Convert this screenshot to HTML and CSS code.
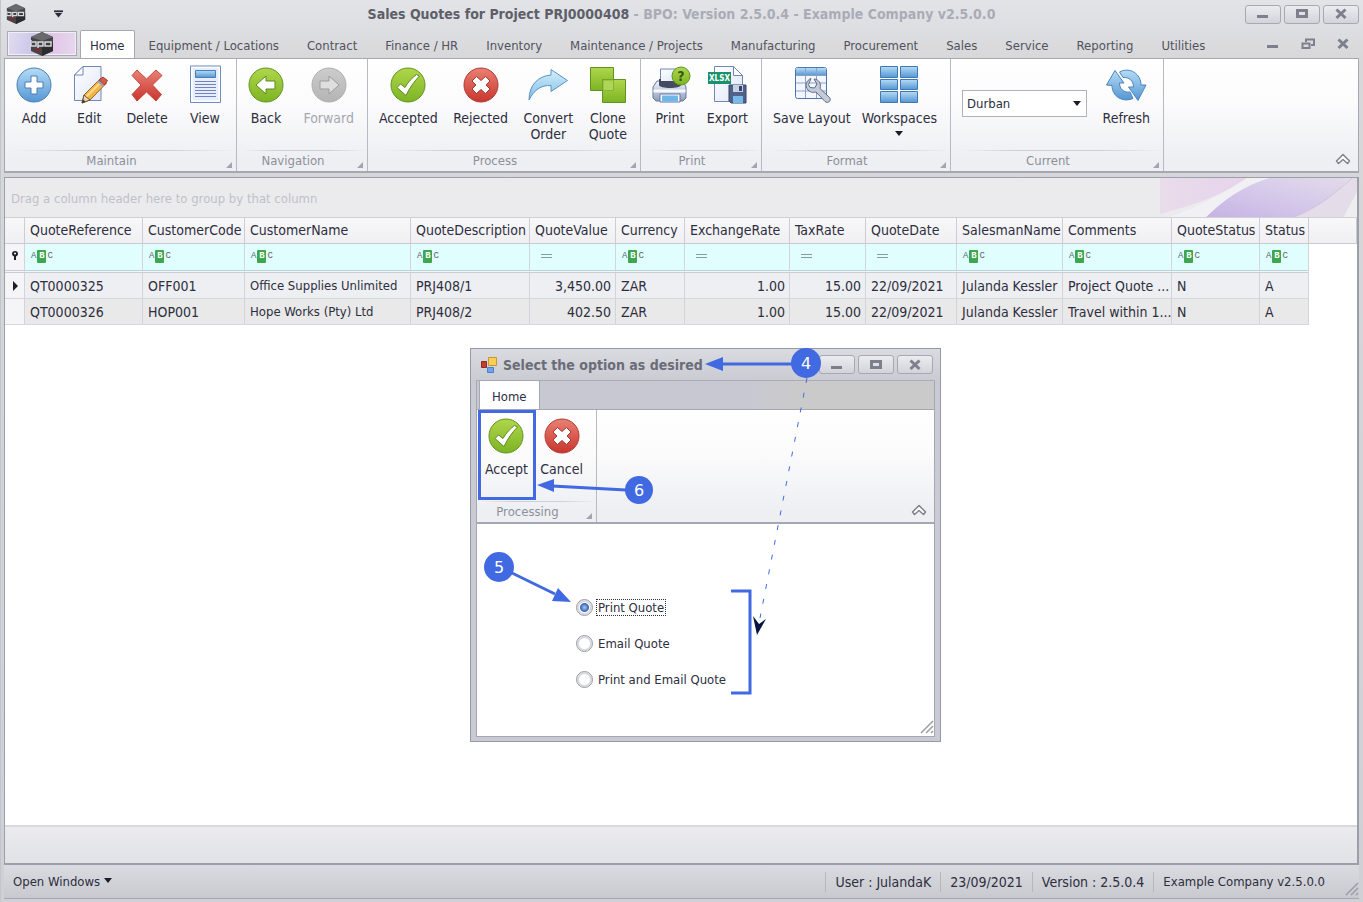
FILE: index.html
```
<!DOCTYPE html>
<html lang="en">
<head>
    <meta charset="UTF-8">
    <meta name="viewport" content="width=device-width, initial-scale=1.0">
    <title>Sales Quotes for Project PRJ0000408</title>
    <link rel="stylesheet" href="styles.css">
</head>
<body>

    <!-- shared gradients and symbols -->
    <svg class="defs" width="0" height="0" aria-hidden="true">
        <defs>
            <linearGradient id="blue" x1="0" y1="0" x2="0" y2="1"><stop offset="0" stop-color="#b5dcf6"/><stop offset="1" stop-color="#5596d3"/></linearGradient>
            <linearGradient id="sky" x1="0" y1="0" x2="0" y2="1"><stop offset="0" stop-color="#d3effb"/><stop offset="1" stop-color="#7fbde8"/></linearGradient>
            <linearGradient id="green" x1="0" y1="0" x2="0" y2="1"><stop offset="0" stop-color="#b0d64a"/><stop offset="1" stop-color="#7cb424"/></linearGradient>
            <linearGradient id="red" x1="0" y1="0" x2="0" y2="1"><stop offset="0" stop-color="#ea8074"/><stop offset="1" stop-color="#c8362e"/></linearGradient>
            <linearGradient id="grey" x1="0" y1="0" x2="0" y2="1"><stop offset="0" stop-color="#cccccc"/><stop offset="1" stop-color="#b4b4b4"/></linearGradient>
            <linearGradient id="paper" x1="0" y1="0" x2="1" y2="1"><stop offset="0" stop-color="#ffffff"/><stop offset="1" stop-color="#dfe6f6"/></linearGradient>
            <linearGradient id="metal" x1="0" y1="0" x2="0" y2="1"><stop offset="0" stop-color="#f4f6fb"/><stop offset="1" stop-color="#8e9cbb"/></linearGradient>
            <symbol id="i-check" viewBox="0 0 36 36">
                <circle cx="18" cy="18" r="17" fill="url(#green)" stroke="#5f9420"/>
                <path d="M7 20.500l3.500-3.500 4.500 3.500C18 15 22 11 26.500 7.500L29.500 9C24 14.500 19.500 21 16 28.500z" fill="#fff" stroke="#5d8a1e" stroke-linejoin="round"/>
            </symbol>
            <symbol id="i-cross" viewBox="0 0 36 36">
                <circle cx="18" cy="18" r="17" fill="url(#red)" stroke="#b03a32"/>
                <path d="M13.500 9.500L18 13.500l4.500-4 4.500 4.500-4 4 4 4-4.500 4.500-4.500-4-4.500 4L9 22l4-4-4-4z" fill="#fff" stroke="#a5372f" stroke-linejoin="round"/>
            </symbol>
            <symbol id="i-logo" viewBox="0 0 24 24">
                <path d="M12 0l11 5v14l-11 5L1 19V5z" fill="#454548"/>
                <path d="M12 0l11 5-11 4L1 5z" fill="#6a6a6d"/>
                <path d="M12 14l11-3v8l-11 5z" fill="#2c2c2f"/>
                <path d="M1 8v6h5V10H2M8 16v-6h5v4H8M15 10h6v4h-6z" fill="none" stroke="#d8d8dc" stroke-width="1.500"/>
                <path d="M6 16l4 1-1 3-4-2z" fill="#8f2525"/>
            </symbol>
            <symbol id="i-min" viewBox="0 0 14 12"><path d="M1 8.500h11" stroke="#7c7f8c" stroke-width="3"/></symbol>
            <symbol id="i-max" viewBox="0 0 14 12"><rect x="2.500" y="2.500" width="9" height="6" fill="none" stroke="#7c7f8c" stroke-width="3"/></symbol>
            <symbol id="i-close" viewBox="0 0 14 12"><path d="M2.500 1.500l9 8.500M11.500 1.500l-9 8.500" stroke="#7c7f8c" stroke-width="3"/></symbol>
            <symbol id="i-up" viewBox="0 0 16 12"><path d="M1.500 8L8 1.500 14.500 8l-2 2.500L8 6.500 3.500 10.500z" fill="#fff" stroke="#7f828c" stroke-width="1.500" stroke-linejoin="round"/></symbol>
            <symbol id="i-grip" viewBox="0 0 14 14"><path d="M1 13L13 1M6 13l7-7M11 13l2-2" stroke="#9a9ca8" stroke-width="1.500"/></symbol>
        </defs>
    </svg>

    <div class="window">
        <header class="titlebar">
            <div class="quick">
                <svg class="logo-small" viewBox="0 0 24 24"><use href="#i-logo"/></svg>
                <button class="quick-more" aria-label="Customize toolbar"><svg viewBox="0 0 10 8"><path d="M0 1h10" stroke="#2a2b38" stroke-width="2"/><path d="M1 3h8L5 8z" fill="#2a2b38"/></svg></button>
            </div>
            <h1>Sales Quotes for Project PRJ0000408 <span>- BPO: Version 2.5.0.4 - Example Company v2.5.0.0</span></h1>
            <div class="win-buttons">
                <button aria-label="Minimize"><svg viewBox="0 0 14 12"><use href="#i-min"/></svg></button>
                <button aria-label="Maximize"><svg viewBox="0 0 14 12"><use href="#i-max"/></svg></button>
                <button aria-label="Close"><svg viewBox="0 0 14 12"><use href="#i-close"/></svg></button>
            </div>
        </header>

        <nav class="tabs">
            <button class="app-button" aria-label="Application menu"><svg viewBox="0 0 24 24"><use href="#i-logo"/></svg></button>
            <a class="tab active" href="#">Home</a>
            <a class="tab" href="#">Equipment / Locations</a>
            <a class="tab" href="#">Contract</a>
            <a class="tab" href="#">Finance / HR</a>
            <a class="tab" href="#">Inventory</a>
            <a class="tab" href="#">Maintenance / Projects</a>
            <a class="tab" href="#">Manufacturing</a>
            <a class="tab" href="#">Procurement</a>
            <a class="tab" href="#">Sales</a>
            <a class="tab" href="#">Service</a>
            <a class="tab" href="#">Reporting</a>
            <a class="tab" href="#">Utilities</a>
            <div class="mdi-buttons">
                <button aria-label="Minimize child"><svg viewBox="0 0 14 12"><use href="#i-min"/></svg></button>
                <button aria-label="Restore child"><svg viewBox="0 0 14 12"><path d="M5 4V1.500h8V7h-3M1.500 5.500h7V10h-7z" fill="none" stroke="#7c7f8c" stroke-width="2"/></svg></button>
                <button aria-label="Close child"><svg viewBox="0 0 14 12"><use href="#i-close"/></svg></button>
            </div>
        </nav>

        <div class="ribbon main-ribbon">
            <section class="group">
                <div class="items">
                    <button class="item">
                        <svg viewBox="0 0 36 36"><circle cx="18" cy="18" r="17" fill="url(#blue)" stroke="#4a7fb5"/><path d="M15 9h6v6h6v6h-6v6h-6v-6H9v-6h6z" fill="#fff" stroke="#4a7fb5"/></svg>
                        Add
                    </button>
                    <button class="item">
                        <svg viewBox="0 0 36 36"><path d="M12 -.5h18v34H3.500V8z" fill="url(#paper)" stroke="#7187b8"/><path d="M12-.5V8H3.500z" fill="#fff" stroke="#7187b8"/><path d="M11 36l2-8L30 11l5.500 5L19 33z" fill="#f6b445" stroke="#8c6427"/><path d="M15 30L32 13" stroke="#fbdc8c" stroke-width="2"/><path d="M28 13l4-3 4.500 3.500-3 4.500z" fill="#d9584a" stroke="#964038"/><path d="M27 14l5 5" stroke="#8fa0c0" stroke-width="2"/><path d="M11 36l2-8 6 5z" fill="#e9d3ad" stroke="#6b5438"/><path d="M11 36l1-3.500 2.500 2z" fill="#333"/></svg>
                        Edit
                    </button>
                    <button class="item">
                        <svg viewBox="0 0 36 36"><path d="M8 3l9.500 9L27 3l6 5.500-9.500 9.500 9 9.500-5.500 6.500-9.500-9-9.500 9-5-6.500 9-9.500-9-9.500z" fill="url(#red)" stroke="#c5483f" stroke-linejoin="round"/></svg>
                        Delete
                    </button>
                    <button class="item">
                        <svg viewBox="0 0 36 36"><path d="M3.500-1h30v36.500h-30z" fill="#fff" stroke="#6d8cc0"/><path d="M5.500 1h26v32.500h-26z" fill="#e7edfa"/><path d="M8.500 3.500h20v7h-20z" fill="url(#blue)" stroke="#4a7fb5"/><path d="M8 14.500h21M8 17.500h21M8 20.500h21M8 23.500h21M8 26.500h21M8 29.500h21" stroke="#7184bb"/></svg>
                        View
                    </button>
                </div>
                <h2>Maintain</h2>
            </section>

            <section class="group">
                <div class="items">
                    <button class="item">
                        <svg viewBox="0 0 36 36"><circle cx="18" cy="18" r="17" fill="url(#green)" stroke="#5f9420"/><path d="M8 18L18 9v5h9v8h-9v5z" fill="#fff" stroke="#5d8a1e"/></svg>
                        Back
                    </button>
                    <button class="item" disabled>
                        <svg viewBox="0 0 36 36"><circle cx="18" cy="18" r="17" fill="url(#grey)" stroke="#b0b0b0"/><path d="M28 18L18 9v5H9v8h9v5z" fill="#dedede" stroke="#9c9c9c"/></svg>
                        Forward
                    </button>
                </div>
                <h2>Navigation</h2>
            </section>

            <section class="group">
                <div class="items">
                    <button class="item">
                        <svg viewBox="0 0 36 36"><use href="#i-check"/></svg>
                        Accepted
                    </button>
                    <button class="item">
                        <svg viewBox="0 0 36 36"><use href="#i-cross"/></svg>
                        Rejected
                    </button>
                    <button class="item">
                        <svg viewBox="0 0 36 36"><path d="M-1 33C-1 18 8 9 21 8V2.500L37.500 13.500 21 24.500v-6C11 18 4 23-1 33z" fill="url(#sky)" stroke="#5d93c4" stroke-linejoin="round"/></svg>
                        Convert<br>Order
                    </button>
                    <button class="item">
                        <svg viewBox="0 0 36 36"><path d="M.5.500h23v23H.5z" fill="url(#green)" stroke="#5f9420"/><path d="M12.500 12.500h23v23h-23z" fill="url(#green)" stroke="#5f9420"/><path d="M13 13h10.500v10.500H13z" fill="#aed556" stroke="#86b536"/></svg>
                        Clone<br>Quote
                    </button>
                </div>
                <h2>Process</h2>
            </section>

            <section class="group">
                <div class="items">
                    <button class="item">
                        <svg viewBox="0 0 36 36"><path d="M8.500 2h16v15h-16z" fill="url(#paper)" stroke="#7187b8"/><path d="M5 14h26l3 6v11l-3 3H4l-3-3V20z" fill="url(#metal)" stroke="#6477a3"/><path d="M7 12h22v6c0 4-22 4-22 0z" fill="#434b60"/><path d="M9 3h15v11H9z" fill="url(#paper)"/><path d="M1.500 24h32" stroke="#f6f8fc" stroke-width="3"/><path d="M8 27h20v8H8z" fill="#f7faff" stroke="#6477a3"/><path d="M10 28.500h16v6H10z" fill="#6eb5e9"/><circle cx="29" cy="9" r="9" fill="url(#green)" stroke="#5f9420"/><text class="glyph glyph-help" x="29" y="14">?</text></svg>
                        Print
                    </button>
                    <button class="item">
                        <svg viewBox="0 0 36 36"><path d="M5.500-.5h19l9 9v26h-28z" fill="url(#paper)" stroke="#7187b8"/><path d="M24.500-.5v9h9z" fill="#fff" stroke="#7187b8"/><path d="M-1 5h23v12H-1z" fill="#19916a"/><text class="glyph glyph-xlsx" x="10.500" y="14">XLSX</text><path d="M20 18h17v18H22l-2-2z" fill="#51618a" stroke="#36456c"/><path d="M24 18h10v7H24z" fill="#c9d2e4"/><path d="M30 19h3v5h-3z" fill="#36456c"/><path d="M24 29h10v7H24z" fill="#79b9ea"/></svg>
                        Export
                    </button>
                </div>
                <h2>Print</h2>
            </section>

            <section class="group">
                <div class="items">
                    <button class="item">
                        <svg viewBox="0 0 36 36"><rect x="1.500" y=".5" width="31" height="31" rx="2" fill="#f3f6fd" stroke="#5573ab"/><path d="M2 1h30v7.500H2z" fill="url(#blue)"/><path d="M2 8.500h30M2 16h30M2 24h30M11.500 1v30M22.500 1v30" stroke="#8ba1cc"/><path d="M17 11.500c-5 2-6.500 8-3 11.500 3 3 6 2.500 8 2l9 9.500c3 2.500 7-1 4.500-4L26 21.500c1.500-5-1-9-6-9.500l3 5-2.500 4-4.500-.5-1.500-3z" fill="#c3cad8" stroke="#5f6b84"/></svg>
                        Save Layout
                    </button>
                    <button class="item">
                        <svg viewBox="0 0 36 36"><g fill="url(#blue)" stroke="#3f78b5"><path d="M-.5-.5h17v11h-17z"/><path d="M19.500-.5h17v11h-17z"/><path d="M-.5 12.500h17v10h-17z"/><path d="M19.500 12.500h17v10h-17z"/><path d="M-.5 24.500h17v11h-17z"/><path d="M19.500 24.500h17v11h-17z"/></g></svg>
                        Workspaces
                        <span class="caret"></span>
                    </button>
                </div>
                <h2>Format</h2>
            </section>

            <section class="group">
                <div class="items">
                    <div class="combo">
                        <select aria-label="Current site"><option>Durban</option></select>
                        <span class="caret"></span>
                    </div>
                    <button class="item">
                        <svg viewBox="0 0 36 36"><g fill="url(#blue)" stroke="#4a86bd" stroke-linejoin="round"><path d="M7 3.500L16 16h-4.500c0 6 4.500 10 10.500 9l3 6.500C14 36 4 29 4 18.500L-1.500 18z"/><path d="M30 33.500L20.500 20h5c0-6-4-10-10.500-9.500L11.500 5C22-.500 33 7 33 18h5z"/></g></svg>
                        Refresh
                    </button>
                </div>
                <h2>Current</h2>
            </section>

            <button class="collapse" aria-label="Collapse ribbon"><svg viewBox="0 0 16 12"><use href="#i-up"/></svg></button>
        </div>

        <main class="content">
            <div class="group-panel">
                <span>Drag a column header here to group by that column</span>
                <svg viewBox="0 0 200 40" preserveAspectRatio="none" aria-hidden="true">
                    <defs>
                        <linearGradient id="pink" x1="0" y1="0" x2="1" y2="0"><stop offset="0" stop-color="#e9dcea"/><stop offset="1" stop-color="#e6d3ec"/></linearGradient>
                        <linearGradient id="violet" x1="0" y1="1" x2="1" y2="0"><stop offset="0" stop-color="#c4b2e4"/><stop offset=".5" stop-color="#d5c9ea"/><stop offset="1" stop-color="#e3dcea"/></linearGradient>
                    </defs>
                    <path d="M3 0h87C70 14 48 24 3 36z" fill="url(#pink)"/>
                    <path d="M112 0h88v40H48C66 22 86 8 112 0z" fill="url(#violet)"/>
                    <path d="M90 0h22C86 8 66 22 48 40H10C44 28 68 14 90 0z" fill="#f1f0f4"/>
                    <path d="M200 0v40h-65c22-8 44-22 56-40z" fill="#e4dce9"/>
                    <path d="M200 14v26h-14z" fill="#eeeef1"/>
                    <path d="M135 40c24-10 40-22 60-40" fill="none" stroke="#d3c3df"/>
                </svg>
            </div>

            <table class="grid">
                <colgroup>
                    <col class="w-mark"><col class="w-ref"><col class="w-code"><col class="w-name"><col class="w-desc"><col class="w-value"><col class="w-curr"><col class="w-rate"><col class="w-tax"><col class="w-date"><col class="w-sales"><col class="w-comm"><col class="w-qstat"><col class="w-stat"><col>
                </colgroup>
                <thead>
                    <tr>
                        <th></th><th>QuoteReference</th><th>CustomerCode</th><th>CustomerName</th><th>QuoteDescription</th><th>QuoteValue</th><th>Currency</th><th>ExchangeRate</th><th>TaxRate</th><th>QuoteDate</th><th>SalesmanName</th><th>Comments</th><th>QuoteStatus</th><th>Status</th><th></th>
                    </tr>
                </thead>
                <tbody>
                    <tr class="filter">
                        <td class="mark"><svg viewBox="0 0 8 10"><path d="M4 0a3 3 0 0 1 3 3c0 1-1 2-2 2.500V9H3V5.500C2 5 1 4 1 3a3 3 0 0 1 3-3z" fill="#1d1e2a"/><circle cx="4" cy="2.500" r="1" fill="#fff"/></svg></td>
                        <td><button class="abc">A<b>B</b>C</button></td>
                        <td><button class="abc">A<b>B</b>C</button></td>
                        <td><button class="abc">A<b>B</b>C</button></td>
                        <td><button class="abc">A<b>B</b>C</button></td>
                        <td><button class="eq" aria-label="Equals"></button></td>
                        <td><button class="abc">A<b>B</b>C</button></td>
                        <td><button class="eq" aria-label="Equals"></button></td>
                        <td><button class="eq" aria-label="Equals"></button></td>
                        <td><button class="eq" aria-label="Equals"></button></td>
                        <td><button class="abc">A<b>B</b>C</button></td>
                        <td><button class="abc">A<b>B</b>C</button></td>
                        <td><button class="abc">A<b>B</b>C</button></td>
                        <td><button class="abc">A<b>B</b>C</button></td>
                        <td class="rest"></td>
                    </tr>
                    <tr>
                        <td class="mark"><svg viewBox="0 0 8 10"><path d="M2 0l5 5-5 5z" fill="#1d1e2a"/></svg></td>
                        <td>QT0000325</td><td>OFF001</td><td class="name">Office Supplies Unlimited</td><td>PRJ408/1</td><td class="num">3,450.00</td><td>ZAR</td><td class="num">1.00</td><td class="num">15.00</td><td>22/09/2021</td><td>Julanda Kessler</td><td>Project Quote ...</td><td>N</td><td>A</td><td class="rest"></td>
                    </tr>
                    <tr class="even">
                        <td class="mark"></td>
                        <td>QT0000326</td><td>HOP001</td><td class="name">Hope Works (Pty) Ltd</td><td>PRJ408/2</td><td class="num">402.50</td><td>ZAR</td><td class="num">1.00</td><td class="num">15.00</td><td>22/09/2021</td><td>Julanda Kessler</td><td>Travel within 1...</td><td>N</td><td>A</td><td class="rest"></td>
                    </tr>
                </tbody>
            </table>
            <div class="grid-footer"></div>
        </main>

        <footer class="statusbar">
            <button class="open-windows">Open Windows <span class="caret"></span></button>
            <span class="status">User : JulandaK</span>
            <span class="status">23/09/2021</span>
            <span class="status">Version : 2.5.0.4</span>
            <span class="status">Example Company v2.5.0.0</span>
            <svg class="grip" viewBox="0 0 14 14"><use href="#i-grip"/></svg>
        </footer>
    </div>

    <div class="dialog" role="dialog" aria-labelledby="dialog-title">
        <header class="dialog-title">
            <svg class="form-icon" viewBox="0 0 16 16"><path d="M.5 4.500h5v6h-5z" fill="#c43b32" stroke="#8f2a24"/><path d="M7.500.5h8v8h-8z" fill="#f6cf57" stroke="#c8962b"/><path d="M6.500 10.500h6v5h-6z" fill="#6ea4ea" stroke="#4a7fcb"/></svg>
            <h2 id="dialog-title">Select the option as desired</h2>
            <div class="win-buttons">
                <button aria-label="Minimize"><svg viewBox="0 0 14 12"><use href="#i-min"/></svg></button>
                <button aria-label="Maximize"><svg viewBox="0 0 14 12"><use href="#i-max"/></svg></button>
                <button aria-label="Close"><svg viewBox="0 0 14 12"><use href="#i-close"/></svg></button>
            </div>
        </header>
        <div class="dialog-inner">
            <nav class="tabs"><a class="tab active" href="#">Home</a></nav>
            <div class="ribbon">
                <section class="group">
                    <div class="items">
                        <button class="item"><svg viewBox="0 0 36 36"><use href="#i-check"/></svg>Accept</button>
                        <button class="item"><svg viewBox="0 0 36 36"><use href="#i-cross"/></svg>Cancel</button>
                    </div>
                    <h2>Processing</h2>
                </section>
                <button class="collapse" aria-label="Collapse ribbon"><svg viewBox="0 0 16 12"><use href="#i-up"/></svg></button>
            </div>
            <form class="options">
                <label><input type="radio" name="output" checked><span>Print Quote</span></label>
                <label><input type="radio" name="output"><span>Email Quote</span></label>
                <label><input type="radio" name="output"><span>Print and Email Quote</span></label>
                <svg class="grip" viewBox="0 0 14 14"><use href="#i-grip"/></svg>
            </form>
        </div>

        <!-- numbered callouts -->
        <svg class="callouts" width="470" height="394" viewBox="0 0 470 394">
            <g fill="none" stroke="#4169e1" stroke-width="3">
                <path d="M9.500 63.500h55v87h-55z"/>
                <path d="M261 243h19v102h-19"/>
                <path d="M322 16h-71M156 142l-74-4M42 225l43 21"/>
            </g>
            <path d="M337 30L290 270" stroke="#4169e1" stroke-dasharray="5 10" fill="none"/>
            <path d="M283 268l6 8 7-5-9 16z" fill="#0a1440"/>
            <g fill="#4169e1">
                <path d="M235 16l18-7v14zM67 137l17-6v13zM101 254l-19-1 6-13z"/>
                <circle cx="336" cy="15" r="15"/>
                <circle cx="29" cy="219" r="15"/>
                <circle cx="169" cy="142" r="14"/>
            </g>
            <g class="numbers">
                <text x="336" y="21">4</text>
                <text x="29" y="225">5</text>
                <text x="169" y="148">6</text>
            </g>
        </svg>
    </div>

</body>
</html>
```
FILE: styles.css
```
* { box-sizing: border-box; }
body { margin: 0; font-family: "DejaVu Sans Condensed", "Noto Sans", sans-serif; font-size: 14px; line-height: 16px; color: #2d2e3e; background: #d9dade; }
h1, h2 { margin: 0; font-size: 14px; }
button, select { font: inherit; color: inherit; border: 0; padding: 0; background: none; }
a { color: inherit; text-decoration: none; }
.defs { position: absolute; }

.window { display: flex; flex-direction: column; min-height: 100vh; padding: 0 4px 3px 3px; background: linear-gradient(#e3e4e8, #d8d8da 58px, #cfd0d6); border-left: 1px solid #c3c5cd; }

/* title bar */
.titlebar { display: grid; grid-template-columns: 1fr auto 1fr; align-items: center; height: 28px; }
.titlebar h1 { color: #5d5f69; white-space: nowrap; }
.titlebar h1 span { color: #a9acb6; }
.quick { display: flex; align-items: center; gap: 28px; padding-left: 2px; }
.logo-small { width: 20px; height: 20px; }
.quick-more svg { display: block; width: 9px; height: 8px; }
.win-buttons { display: flex; justify-content: flex-end; gap: 3px; }
.win-buttons button { display: flex; align-items: center; justify-content: center; width: 36px; height: 19px; border: 1px solid #a6a8b3; border-radius: 3px; background: linear-gradient(#ebecef, #d3d4da); }
.win-buttons svg { width: 14px; height: 12px; }

/* tabs */
.tabs { display: flex; align-items: flex-end; height: 30px; font-size: 13px; color: #50525e; }
.tab { padding: 8px 14px 4px; white-space: nowrap; }
.tab.active { padding: 7px 9px 4px; margin-left: 3px; color: #2d2e3e; background: #fff; border: 1px solid #a5a7b3; border-bottom: 0; border-radius: 2px 2px 0 0; }
.app-button { display: flex; justify-content: center; align-items: center; width: 70px; height: 25px; margin: 0 0 2px 3px; border: 1px solid #aaa8b8; background: linear-gradient(100deg, #e2dcf0, #c9c5ea 40%, #e3c9e8 70%, #e6d8ee); box-shadow: inset 0 0 0 1px #f2eef6; }
.app-button svg { width: 24px; height: 24px; }
.mdi-buttons { display: flex; gap: 21px; margin-left: auto; padding: 0 9px 8px 0; }
.mdi-buttons svg { display: block; width: 14px; height: 12px; }

/* ribbon */
.ribbon { display: grid; height: 115px; background: linear-gradient(#fff, #fbfbfc 40%, #eeeff3 90%); border: 1px solid #a5a7b3; border-width: 1px 0 2px; }
.main-ribbon { grid-template-columns: 232px 131px 273px 121px 189px 213px 1fr; border-left-width: 1px; border-right-width: 1px; }
.group { position: relative; display: flex; flex-direction: column; justify-content: space-between; border-right: 1px solid #b7b9c3; }
.group::after { content: ""; position: absolute; right: 4px; bottom: 3px; border: 3px solid #a3a5ae; border-top-color: transparent; border-left-color: transparent; }
.items { display: flex; justify-content: space-between; align-items: flex-start; padding: 8px 13px 0 11px; }
.group h2 { height: 21px; padding-right: 18px; line-height: 20px; font-size: 13px; font-weight: normal; text-align: center; color: #8d8f99; border-top: 1px solid; border-image: linear-gradient(90deg, transparent 5%, #cfd0d7 30%, #cfd0d7 70%, transparent) 1; }
.item { min-width: 36px; text-align: center; white-space: nowrap; }
.item svg { display: block; width: 36px; height: 36px; margin: 0 auto 7px; overflow: visible; }
.item:disabled { color: #a5a7b0; }
.item .caret { display: block; margin: 5px auto 0; }
.caret { display: inline-block; width: 0; border: 4px solid transparent; border-top: 5px solid #1d1e2a; border-bottom: 0; }
.combo { position: relative; width: 125px; margin-top: 23px; }
.combo select { appearance: none; display: block; width: 100%; height: 27px; padding: 0 4px; font-size: 13px; background: #fff; border: 1px solid #b0b2bc; }
.combo .caret { position: absolute; right: 6px; top: 11px; pointer-events: none; }
.collapse { align-self: end; justify-self: end; padding: 0 7px 6px 0; }
.collapse svg { display: block; width: 16px; height: 12px; }
.glyph { font-weight: bold; text-anchor: middle; }
.glyph-help { font-size: 14px; fill: #2f5a10; }
.glyph-xlsx { font-size: 8px; fill: #fff; }

/* data grid */
.content { flex: 1; display: flex; flex-direction: column; margin-top: 4px; background: #fff; border: 1px solid #9c9eaa; border-width: 1px 2px 2px 1px; }
.group-panel { position: relative; height: 39px; padding: 13px 6px 0; font-size: 13px; color: #bfc1c9; background: #ebebed; }
.group-panel svg { position: absolute; right: 0; top: 0; width: 200px; height: 40px; }
.grid { position: relative; width: 100%; table-layout: fixed; border-collapse: separate; border-spacing: 0; }
.grid th, .grid td { height: 26px; padding: 0 4px 0 5px; text-align: left; font-weight: normal; white-space: nowrap; overflow: hidden; border-right: 1px solid #d3d4db; border-bottom: 1px solid #d6d7dc; }
.grid th { height: 27px; padding-right: 0; padding-bottom: 2px; background: linear-gradient(#f8f8f9, #f0f0f3); border-top: 1px solid #d0d1d7; border-right-color: #cbccd4; border-bottom-color: #c9cad2; }
.grid td { background: #eeeff2; }
.grid .even td { background: #e9e9e9; }
.grid .filter td { height: 29px; padding-bottom: 2px; background: #e0fefe; border-bottom: 3px double #cbccd3; }
.grid td.num { text-align: right; }
.grid td.name { font-size: 13px; }
.grid td.mark, .grid .even td.mark, .grid .filter td.mark { background: #f5f5f7; text-align: center; }
.grid td.rest, .grid .even td.rest, .grid .filter td.rest { background: #fff; border: 0; }
.mark svg { width: 8px; height: 10px; }
.w-mark { width: 20px; }
.w-ref { width: 118px; }
.w-code { width: 102px; }
.w-name { width: 166px; }
.w-desc { width: 119px; }
.w-value { width: 86px; }
.w-curr { width: 69px; }
.w-rate { width: 105px; }
.w-tax { width: 76px; }
.w-date { width: 91px; }
.w-sales { width: 106px; }
.w-comm { width: 109px; }
.w-qstat { width: 88px; }
.w-stat { width: 49px; }
.abc { display: flex; align-items: center; gap: 1px; padding-left: 1px; font: 9px/13px "Liberation Mono", monospace; color: #5d656c; }
.abc b { width: 9px; color: #fff; text-align: center; background: #3fa650; border-radius: 1px; }
.eq { display: block; width: 11px; height: 4px; margin-left: 6px; border: 1px solid #8c9aa2; border-width: 1px 0; }
.grid-footer { height: 38px; margin-top: auto; background: linear-gradient(#ebebee, #e1e2e6); border-top: 2px solid #d8d9df; }

/* status bar */
.statusbar { position: relative; display: flex; align-items: center; height: 34px; padding: 0 22px 0 9px; border-bottom: 1px solid #a5a7b3; background: linear-gradient(#dadbe0, #c9cad0); }
.open-windows { margin-right: auto; font-size: 13px; }
.open-windows .caret { margin: 0 0 3px; }
.status { padding: 2px 9px; border-left: 1px solid #b4b6be; white-space: nowrap; }
.status:last-of-type { font-size: 13px; padding-right: 12px; }
.grip { position: absolute; right: 0; bottom: 2px; width: 14px; height: 14px; }

/* dialog */
.dialog { position: absolute; left: 470px; top: 348px; width: 471px; padding: 0 5px 4px; background: #c9cad3; border: 1px solid #9698a5; }
.dialog-title { display: flex; align-items: center; height: 31px; margin: 0 -5px; padding: 0 7px 0 10px; background: linear-gradient(#dadbe0, #cbccd3); }
.dialog-title h2 { margin: 0 auto 0 6px; color: #6a6c78; }
.form-icon { width: 16px; height: 16px; }
.dialog-inner { border: 1px solid #a5a7b3; border-top-color: #a9abb5; }
.dialog .tabs { height: 28px; background: linear-gradient(90deg, #c8c8d2 60%, #cacaca 70%); }
.dialog .tab { padding: 8px 12px 4px; margin-left: 2px; }
.dialog .ribbon { grid-template-columns: 120px 1fr; }
.dialog .items { padding-left: 8px; }
.options { position: relative; display: flex; flex-direction: column; align-items: flex-start; gap: 18px; padding: 74px 0 48px 99px; font-size: 13px; background: #fff; }
.options label { display: flex; align-items: center; gap: 1px; height: 18px; }
.options span { padding: 0 1px; border: 1px dotted transparent; line-height: 15px; }
.options input { appearance: none; width: 17px; height: 17px; margin: 0 2px 0 0; border: 1px solid #9a9ca5; border-radius: 50%; background: #fff; box-shadow: inset 0 0 0 2px #d8d9de; }
.options input:checked { background: radial-gradient(circle at 50% 50%, #a9c8f5, #3f66b5 4px, #fff 5px); }
.options input:checked + span { border-color: #2d2e3e; }
.callouts { position: absolute; left: -1px; top: -1px; overflow: visible; pointer-events: none; }
.numbers { font-family: "DejaVu Sans", sans-serif; font-size: 16px; text-anchor: middle; fill: #fff; }
```
